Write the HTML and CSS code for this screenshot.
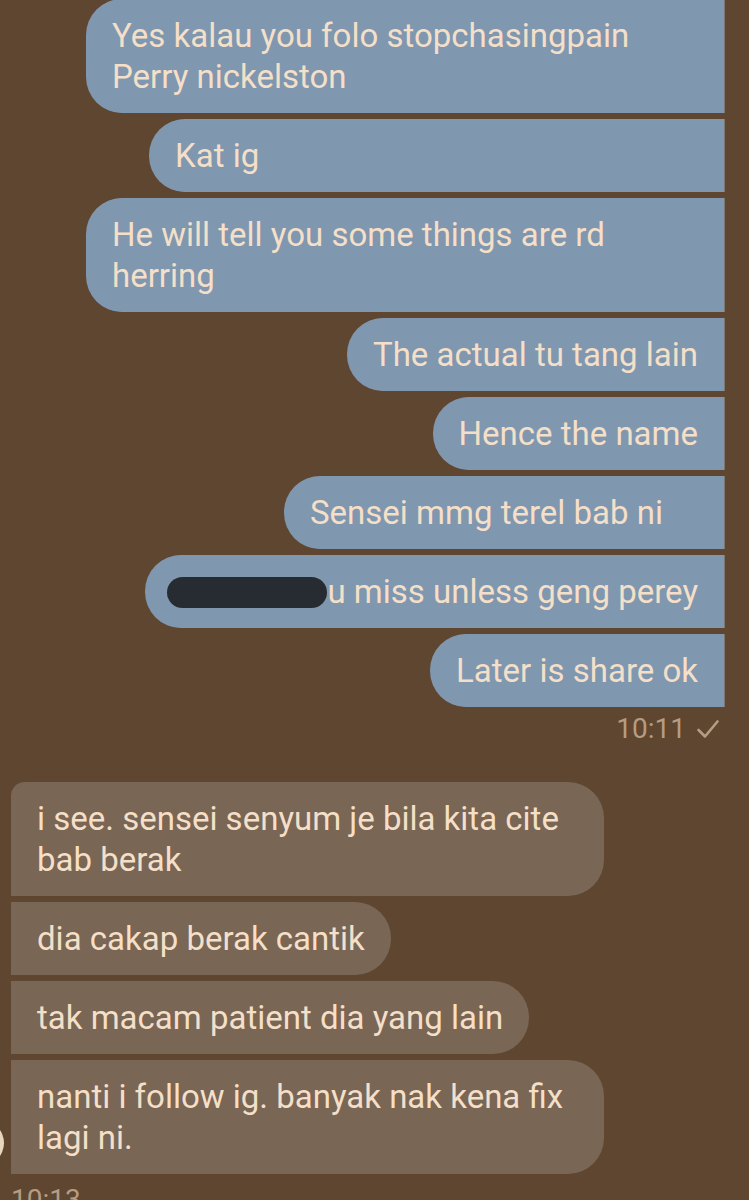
FILE: index.html
```html
<!DOCTYPE html>
<html>
<head>
<meta charset="utf-8">
<link rel="stylesheet" href="styles.css">
</head>
<body>
<div class="chat">
  <div class="group out">
    <div class="bubble w-638">Yes kalau you folo stopchasingpain<br>Perry nickelston</div>
    <div class="bubble w-575">Kat ig</div>
    <div class="bubble w-638">He will tell you some things are rd herring</div>
    <div class="bubble">The actual tu tang lain</div>
    <div class="bubble">Hence the name</div>
    <div class="bubble w-440">Sensei mmg terel bab ni</div>
    <div class="bubble"><span class="redact"></span>u miss unless geng perey</div>
    <div class="bubble">Later is share ok</div>
    <div class="meta out-meta">10:11 <svg class="check" width="24" height="20" viewBox="0 0 24 20"><path d="M2.5 11 L9 17.5 L21.5 2.5" fill="none" stroke="currentColor" stroke-width="2.6" stroke-linecap="round" stroke-linejoin="round"/></svg></div>
  </div>
  <div class="group in">
    <div class="bubble first">i see. sensei senyum je bila kita cite bab berak</div>
    <div class="bubble">dia cakap berak cantik</div>
    <div class="bubble">tak macam patient dia yang lain</div>
    <div class="bubble">nanti i follow ig. banyak nak kena fix lagi ni.</div>
    <div class="meta in-meta">10:13</div>
    <span class="avatar"></span>
  </div>
</div>
</body>
</html>
```

FILE: styles.css
```css
html, body {
  margin: 0;
  padding: 0;
  background: #5e4630;
  height: 100%;
  overflow: hidden;
}
.chat {
  font-family: Roboto, "Noto Sans", sans-serif;
  font-size: 33px;
  line-height: 41px;
  color: #f4dfc8;
  display: flex;
  flex-direction: column;
}
.group {
  display: flex;
  flex-direction: column;
  gap: 6px;
  position: relative;
}
.group.out {
  align-items: flex-end;
  padding: 0 25px 0 0;
  margin-top: -1px;
}
.group.in {
  align-items: flex-start;
  padding: 0 0 0 11px;
  margin-top: 37px;
}
.bubble {
  box-sizing: border-box;
  padding: 16px 26px;
  max-width: 638px;
}
.out .bubble {
  background: #8097b0;
  border-radius: 36px 0 0 36px;
  box-shadow: 1px 0 0 #7c7770;
}
.in .bubble {
  background: #7a6654;
  border-radius: 0 36px 36px 0;
  max-width: 593px;
}
.in .bubble.first {
  border-top-left-radius: 14px;
}
.w-638 { width: 638px; }
.w-575 { width: 575px; }
.w-440 { width: 440px; }
.redact {
  display: inline-block;
  width: 160px;
  height: 31px;
  background: #272c33;
  border-radius: 16px;
  vertical-align: -5px;
  margin-left: -4px;
}
.meta {
  font-size: 28px;
  line-height: 32px;
  color: #b59c83;
}
.out-meta {
  margin-top: 0;
  padding-right: 4px;
  display: flex;
  align-items: center;
  gap: 10px;
}
.check { color: #b59c83; }
.in-meta {
  margin-top: 4px;
}
.avatar {
  position: absolute;
  left: -42px;
  top: 338px;
  width: 46px;
  height: 46px;
  border-radius: 50%;
  background: #e9d6bf;
}
```
